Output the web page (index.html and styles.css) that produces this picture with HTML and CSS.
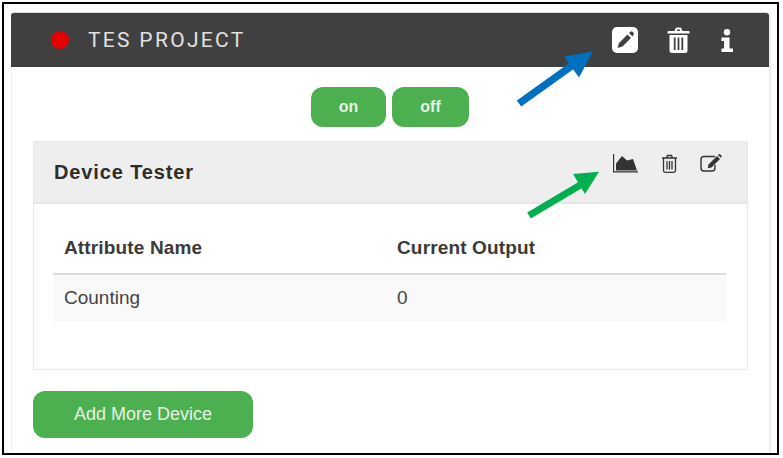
FILE: index.html
```html
<!DOCTYPE html>
<html lang="en">
  <head>
    <meta charset="UTF-8" />
    <title>TES Project</title>
    <link rel="stylesheet" href="styles.css">
  </head>
  <body>
    <div class="frame">
      <div class="project-panel">
        <!-- Project header -->
        <div class="project-head">
          <span class="status-dot"></span>
          <span class="project-name">TES PROJECT</span>
          <div class="project-actions">
            <svg class="icon-edit" viewBox="0 0 26 26">
              <rect width="26" height="26" rx="5" fill="#fff" />
              <path d="M15.500 7.500l3.500 3.500-8.500 8.500-5 1.500 1.500-5z" fill="#404040" />
              <path d="M17 6l1.500-1.300a1.500 1.500 0 0 1 2 0l1 1a1.500 1.500 0 0 1 0 2L20.500 9.500z" fill="#404040" />
            </svg>
            <svg class="icon-trash" viewBox="0 0 23 26">
              <path d="M7.500 4l1.200-2.800q.3-.7 1-.7h3.600q.7 0 1 .7L15.500 4h6q1 0 1 1v1.500H.5V5q0-1 1-1zM9.800 4h3.400l-.5-1.400h-2.400z" fill="#fff" fill-rule="evenodd" />
              <path d="M2.500 8h18v15.500q0 2.500-2.500 2.500H5q-2.500 0-2.500-2.500zM6.800 10.500v12.500h1.800V10.500zM10.600 10.500v12.500h1.800V10.500zM14.400 10.500v12.500h1.800V10.500z" fill="#fff" fill-rule="evenodd" />
            </svg>
            <svg class="icon-info" viewBox="0 0 12 23">
              <circle cx="6" cy="3.300" r="3.200" fill="#fff" />
              <path d="M.5 8.500h8v11H12V23H.5v-3.500H3v-7.500H.5z" fill="#fff" />
            </svg>
          </div>
        </div>

        <div class="project-body">
          <div class="switch-row">
            <button class="btn btn-switch">on</button>
            <button class="btn btn-switch btn-off">off</button>
          </div>

          <!-- Device card -->
          <div class="device-card">
            <div class="device-head">
              <h2>Device Tester</h2>
              <div class="device-actions">
                <svg class="icon-chart" viewBox="0 0 25 19">
                  <path d="M.6 0v17.800H25" fill="none" stroke="#333" stroke-width="1.200" />
                  <path d="M3 16.500V9.500L9 2l5 4.500L20 5l4 11.500z" fill="#333" />
                </svg>
                <svg class="icon-bin" viewBox="0 0 17 19">
                  <path d="M1 4h15M5.500 4l1-2.500h4l1 2.500M2.500 4v12.500q0 1.800 1.800 1.800h8.400q1.800 0 1.800-1.800V4M6 7v8.500M8.500 7v8.500M11 7v8.500" fill="none" stroke="#333" stroke-width="1.300" />
                </svg>
                <svg class="icon-write" viewBox="0 0 22 18">
                  <path d="M15 2.500H4Q1 2.500 1 5.500v8.500q0 3 3 3h8q3 0 3-3v-3" fill="none" stroke="#333" stroke-width="1.400" />
                  <path d="M17 2l3 3-8.500 8.500-3.800.8.800-3.800z" fill="#333" />
                  <path d="M18 1l.8-.7q.6-.4 1.200 0l1.500 1.500q.4.600 0 1.200l-.7.800z" fill="#333" />
                </svg>
              </div>
            </div>
            <div class="device-body">
              <table class="attr-table">
                <thead>
                  <tr>
                    <th>Attribute Name</th>
                    <th>Current Output</th>
                  </tr>
                </thead>
                <tbody>
                  <tr>
                    <td>Counting</td>
                    <td>0</td>
                  </tr>
                </tbody>
              </table>
            </div>
          </div>

          <button class="btn btn-add">Add More Device</button>
        </div>
      </div>

      <!-- Annotation arrows drawn over the screenshot -->
      <svg class="annotations" viewBox="0 0 783 458">
        <path d="M519 103.500L575 63.500" stroke="#0070c0" stroke-width="7.500" fill="none" />
        <path d="M593 51.500L564 56.500 579 77.500z" fill="#0070c0" />
        <path d="M529 215.500L582 184" stroke="#00b050" stroke-width="7" fill="none" />
        <path d="M599 171.700L573 174 585 194z" fill="#00b050" />
      </svg>
    </div>
  </body>
</html>
```

FILE: styles.css
```css
/* basic styling */
* {
  margin: 0;
  padding: 0;
  box-sizing: border-box;
}
body {
  font-family: "Liberation Sans", Arial, sans-serif;
  background-color: #ffffff;
  color: #333333;
}

/* Black screenshot frame */
.frame {
  width: 777px;
  height: 453px;
  margin: 2px 0 0 2px;
  padding: 9px 6px 0 7px;
  border: 2px solid #000000;
  overflow: hidden;
}

/* Project panel */
.project-panel {
  height: 100%;
  border-left: 1px solid #eeeeee;
  border-right: 2px solid #eeeeee;
}
.project-head {
  display: flex;
  align-items: center;
  height: 54px;
  margin-left: -1px;
  padding: 0 36px 0 40px;
  background: #404040;
  border-radius: 3px 3px 0 0;
  box-shadow: 0 -1px 0 #dddddd;
}
.status-dot {
  width: 18px;
  height: 18px;
  background: #e60000;
  border-radius: 50%;
}
.project-name {
  margin-left: 19px;
  font-family: Roboto, sans-serif;
  font-size: 21px;
  letter-spacing: 2.3px;
  color: #e0e0e0;
}
.project-actions {
  display: flex;
  align-items: center;
  margin-left: auto;
}
.icon-edit {
  width: 26px;
  height: 26px;
}
.icon-trash {
  width: 23px;
  height: 26px;
  margin-left: 29px;
}
.icon-info {
  width: 12px;
  height: 23px;
  margin-left: 31px;
}

.project-body {
  padding: 20px 0 0 21px;
}

/* On and off switches */
.switch-row {
  display: flex;
  justify-content: center;
  gap: 6px;
  padding-right: 22px;
}
.btn {
  font-family: "Liberation Sans", Arial, sans-serif;
  color: #e4f3e4;
  background: #4caf50;
  border: none;
  border-radius: 12px;
}
.btn-switch {
  width: 75px;
  height: 40px;
  font-size: 16px;
  font-weight: bold;
}
.btn-off {
  width: 77px;
}

/* Device card */
.device-card {
  width: 715px;
  height: 229px;
  margin-top: 14px;
  border: 1px solid #e7e7e7;
}
.device-head {
  display: flex;
  align-items: center;
  height: 62px;
  padding-left: 20px;
  background: #eeeeee;
  border-bottom: 2px solid #e6e6e6;
}
.device-head h2 {
  font-size: 20px;
  letter-spacing: 0.87px;
  color: #2d2d2d;
}
.device-actions {
  display: flex;
  align-items: center;
  margin-left: auto;
  padding: 0 25px 18px 0;
}
.icon-chart {
  width: 25px;
  height: 19px;
}
.icon-bin {
  width: 17px;
  height: 19px;
  margin-left: 23px;
}
.icon-write {
  width: 22px;
  height: 18px;
  margin-left: 22px;
}

/* Attribute table */
.device-body {
  padding: 24px 21px 0 19px;
}
.attr-table {
  width: 673px;
  border-collapse: collapse;
  font-size: 19px;
  text-align: left;
}
.attr-table th {
  height: 46px;
  padding: 0 0 6px 11px;
  border-bottom: 2px solid #dddddd;
  font-weight: bold;
  letter-spacing: 0.15px;
  color: #3a3a3a;
}
.attr-table th:first-child {
  width: 333px;
}
.attr-table td {
  height: 48px;
  padding: 0 0 2px 11px;
  background: #f9f9f9;
  color: #444444;
}

.btn-add {
  display: block;
  width: 220px;
  height: 47px;
  margin-top: 21px;
  font-size: 18px;
}

/* Annotation layer */
.annotations {
  position: absolute;
  top: 0;
  left: 0;
  width: 783px;
  height: 458px;
}
```
